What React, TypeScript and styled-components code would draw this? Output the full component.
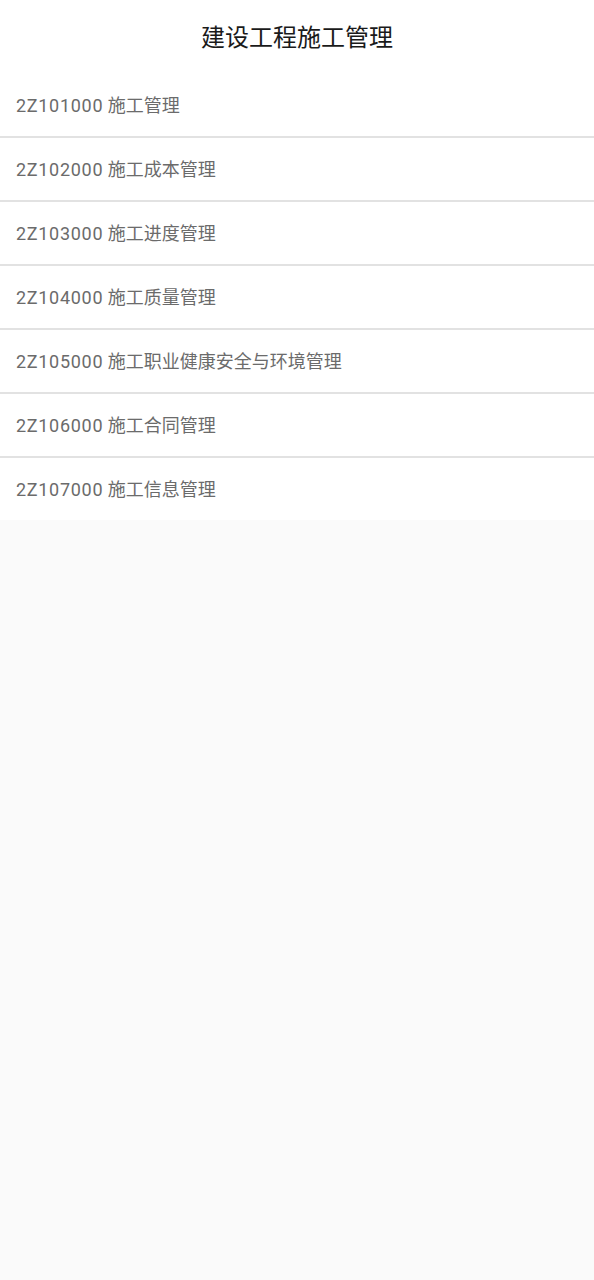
import React from 'react'
import styled, { createGlobalStyle } from 'styled-components'

const GlobalStyle = createGlobalStyle`
    html, body {
        margin: 0;
        padding: 0;
        background: #fafafa;
        font-family: Roboto, "Noto Sans CJK SC", sans-serif;
    }
`

const Header = styled.header`
    height: 74px;
    display: flex;
    align-items: center;
    justify-content: center;
    background: #fff;
`

const Title = styled.h1`
    margin: 0 0 3px;
    font-size: 24px;
    font-weight: 400;
    color: #1a1a1a;
`

const List = styled.ul`
    margin: 0;
    padding: 0;
    list-style: none;
    background: #fff;
`

const Row = styled.li<{ $last?: boolean }>`
    height: 60px;
    display: flex;
    align-items: center;
    padding: 0 16px 2px;
    font-size: 18px;
    color: #6b6b6b;
    border-bottom: ${(p) => (p.$last ? 'none' : '2px solid #e2e2e2')};
`

const Label = styled.span`
    white-space: nowrap;
`

const Code = styled.span`
    letter-spacing: 0.7px;
`

const chapters = [
    { code: '2Z101000', name: '施工管理' },
    { code: '2Z102000', name: '施工成本管理' },
    { code: '2Z103000', name: '施工进度管理' },
    { code: '2Z104000', name: '施工质量管理' },
    { code: '2Z105000', name: '施工职业健康安全与环境管理' },
    { code: '2Z106000', name: '施工合同管理' },
    { code: '2Z107000', name: '施工信息管理' },
]

const App: React.FC = () => {
    return (
        <>
            <GlobalStyle />
            <Header>
                <Title>建设工程施工管理</Title>
            </Header>
            <List>
                {chapters.map((c, i) => (
                    <Row key={c.code} $last={i === chapters.length - 1}>
                        <Label>
                            <Code>{c.code}</Code> {c.name}
                        </Label>
                    </Row>
                ))}
            </List>
        </>
    )
}

export default App
